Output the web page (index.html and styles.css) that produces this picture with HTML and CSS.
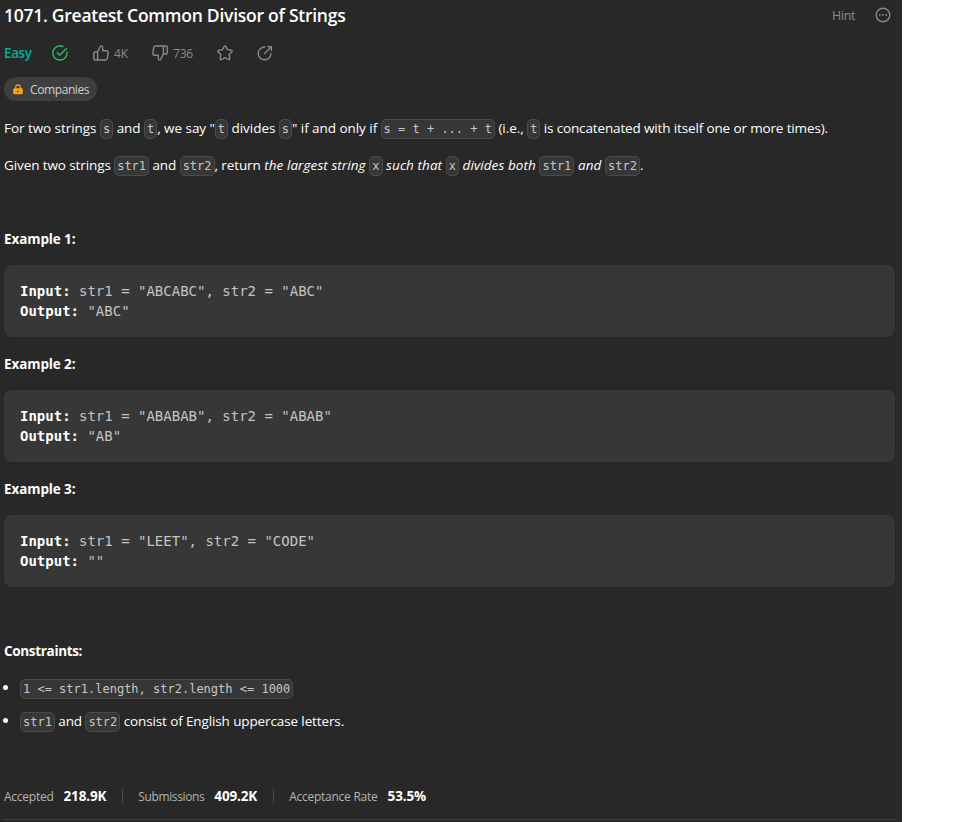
FILE: index.html
```html
<!DOCTYPE html>
<html lang="en">
<head>
<meta charset="utf-8">
<title>Greatest Common Divisor of Strings</title>
<link rel="stylesheet" href="styles.css">
</head>
<body>
<main class="panel">
  <header class="head">
    <h1>1071. Greatest Common Divisor of Strings</h1>
    <div class="tools">
      <span class="hint">Hint</span>
      <svg class="more" viewBox="0 0 16 16"><circle cx="8" cy="8" r="6.8" fill="none" stroke="currentColor" stroke-width="1.4"/><circle cx="4.8" cy="8" r=".9"/><circle cx="8" cy="8" r=".9"/><circle cx="11.2" cy="8" r=".9"/></svg>
    </div>
  </header>
  <div class="meta">
    <span class="easy">Easy</span>
    <svg class="icon solved" viewBox="0 0 16 16"><path d="M10.9 1.5A7.1 7.1 0 1 0 15 7.3M5.2 7.6l2.5 2.6 7-6.9"/></svg>
    <svg class="icon up" viewBox="0 0 16 16"><path d="M4.6 7H1.8q-1 0-1 1v6q0 1 1 1h2.8zM4.6 7l2.6-5.3Q7.5.9 8.4.9q1.300.2 1.300 1.600v3.300h3.800q1.800.1 1.600 1.800l-.8 5.900q-.2 1.500-1.700 1.500h-8"/></svg>
    <span class="count likes">4K</span>
    <svg class="icon down" viewBox="0 0 16 16"><path d="M11.400 9h2.800q1 0 1-1V2q0-1-1-1h-2.800zM11.400 9l-2.600 5.300q-.3.8-1.200.8-1.300-.2-1.300-1.600v-3.300H2.500Q.7 10.100.9 8.400l.8-5.900Q1.900 1 3.400 1h8"/></svg>
    <span class="count dislikes">736</span>
    <svg class="icon star" viewBox="0 0 16 16"><path d="M7.100 1.500q.9-1.300 1.800 0l1.500 3.100 3.700.6q1.600.4.7 1.700L12.200 9.600l.6 3.800q.1 1.600-1.400 1.100L8 12.700l-3.400 1.800q-1.500.5-1.400-1.100l.6-3.800L1.200 6.900Q.3 5.600 1.900 5.200l3.700-.6z"/></svg>
    <svg class="icon share" viewBox="0 0 16 16"><path d="M7.600 2A6.400 6.400 0 1 0 14 8.400M7.600 8.400l6.400-6.400M10.600 1.600h3.800v3.800"/></svg>
  </div>
  <div class="chip">
    <svg class="lock" viewBox="0 0 10 11"><path d="M2.700 5V3.200a2.300 2.300 0 0 1 4.600 0V5" fill="none" stroke="currentColor" stroke-width="1.200"/><rect x=".2" y="4.300" width="9.600" height="6" rx="1.200"/><circle class="keyhole" cx="5" cy="7.300" r=".9"/></svg>
    <span>Companies</span>
  </div>
  <section class="content">
    <p>For two strings <code>s</code> and <code>t</code>, we say "<code>t</code> divides <code>s</code>" if and only if <code>s = t + ... + t</code> (i.e., <code>t</code><span class="tail"> is concatenated with itself one or more times).</span></p>
    <p class="task">Given two strings <code>str1</code> and <code>str2</code>, return <em>the largest string </em><code>x</code><em> such that </em><code>x</code><em> divides both </em><code>str1</code><em> and </em><code>str2</code>.</p>
    <p>&nbsp;</p>
    <p class="example"><strong>Example 1:</strong></p>
    <pre><b>Input:</b> str1 = "ABCABC", str2 = "ABC"
<b>Output:</b> "ABC"</pre>
    <p class="example"><strong>Example 2:</strong></p>
    <pre><b>Input:</b> str1 = "ABABAB", str2 = "ABAB"
<b>Output:</b> "AB"</pre>
    <p class="example"><strong>Example 3:</strong></p>
    <pre><b>Input:</b> str1 = "LEET", str2 = "CODE"
<b>Output:</b> ""</pre>
    <p>&nbsp;</p>
    <p class="constraints"><strong>Constraints:</strong></p>
    <ul>
      <li><code>1 &lt;= str1.length, str2.length &lt;= 1000</code></li>
      <li><code>str1</code> and <code>str2</code> consist of English uppercase letters.</li>
    </ul>
  </section>
  <footer class="stats">
    <div class="stat accepted"><span>Accepted</span><b>218.9K</b></div>
    <div class="stat submissions"><span>Submissions</span><b>409.2K</b></div>
    <div class="stat rate"><span>Acceptance Rate</span><b>53.5%</b></div>
  </footer>
</main>
</body>
</html>
```

FILE: styles.css
```css
* { box-sizing: border-box; }
body { margin: 0; background: #fff; font-family: "Open Sans", "Noto Sans", sans-serif; }
.panel { width: 902px; height: 822px; padding: 0 7px 0 4px; background: #282828; color: #fff; overflow: hidden; }
.head { display: flex; justify-content: space-between; height: 32px; }
h1 { margin: 0; font-size: 17.5px; line-height: 30px; font-weight: 600; letter-spacing: -.25px; white-space: nowrap; }
.tools { display: flex; align-items: center; height: 30px; color: #8a8a8a; padding-right: 4px; }
.hint { font-size: 12.5px; font-weight: 500; letter-spacing: -.4px; margin-right: 20px; }
.more { width: 16px; height: 16px; fill: currentColor; }
.meta { display: flex; align-items: center; height: 42px; color: #8a8a8a; }
.easy { width: 48px; color: #00af9b; font-size: 13.5px; font-weight: 600; letter-spacing: -.4px; }
.icon { width: 16px; height: 16px; flex: none; fill: none; stroke: currentColor; stroke-width: 1.4; stroke-linejoin: round; stroke-linecap: round; }
.solved { color: #2cbb5d; margin-right: 25px; }
.count { font-size: 12px; margin-left: 5px; letter-spacing: -.2px; }
.likes { width: 38px; }
.dislikes { width: 44px; }
.star { margin-right: 24px; }
.chip { display: flex; align-items: center; width: 93px; height: 24px; margin-top: 3px; padding-left: 9px; border-radius: 12px; background: #3e3e3e; color: #d0d0d0; font-size: 12px; letter-spacing: -.4px; }
.lock { width: 10px; height: 11px; margin-right: 7px; color: #ffa116; fill: currentColor; }
.keyhole { fill: #3e3e3e; }
.content { padding-top: 17px; font-size: 13.5px; line-height: 21px; letter-spacing: -.05px; }
p { margin: 0 0 16px; white-space: nowrap; height: 21px; }
em { letter-spacing: .08px; }
.tail { letter-spacing: -.14px; }
.task { letter-spacing: -.1px; }
code { font: 12px/14px "DejaVu Sans Mono", monospace; letter-spacing: 0; padding: 2px; border: 1px solid #4b4b4b; border-radius: 5px; background: #373737; color: #c4c6ca; }
.example { margin-bottom: 15px; letter-spacing: -.1px; }
.constraints { letter-spacing: -.33px; }
pre { margin: 0 0 17px; height: 72px; width: 891px; padding: 16px; border-radius: 8px; background: #373737; color: #c4c4c4; font: 14px/20px "DejaVu Sans Mono", monospace; letter-spacing: 0; }
pre b { color: #fff; }
ul { margin: 0; padding: 0; list-style: none; }
li { display: flex; height: 21px; margin-bottom: 12px; align-items: center; white-space: pre; letter-spacing: -.12px; }
li::before { content: ""; width: 5px; height: 5px; margin: 0 12px 2px -1px; border-radius: 50%; background: #fff; }
.stats { display: flex; align-items: center; height: 47px; margin-top: 41px; border-bottom: 1px solid #424242; }
.stat { display: flex; align-items: center; white-space: nowrap; }
.stat span { font-size: 12px; color: #b3b3b3; margin-right: 10px; letter-spacing: -.25px; }
.submissions span { letter-spacing: -.38px; }
.stat b { font-size: 13.5px; font-weight: 700; letter-spacing: -.15px; }
.stat + .stat::before { content: ""; width: 1px; height: 14px; margin: 0 15px 0 16px; background: #4c4c4c; }
```
